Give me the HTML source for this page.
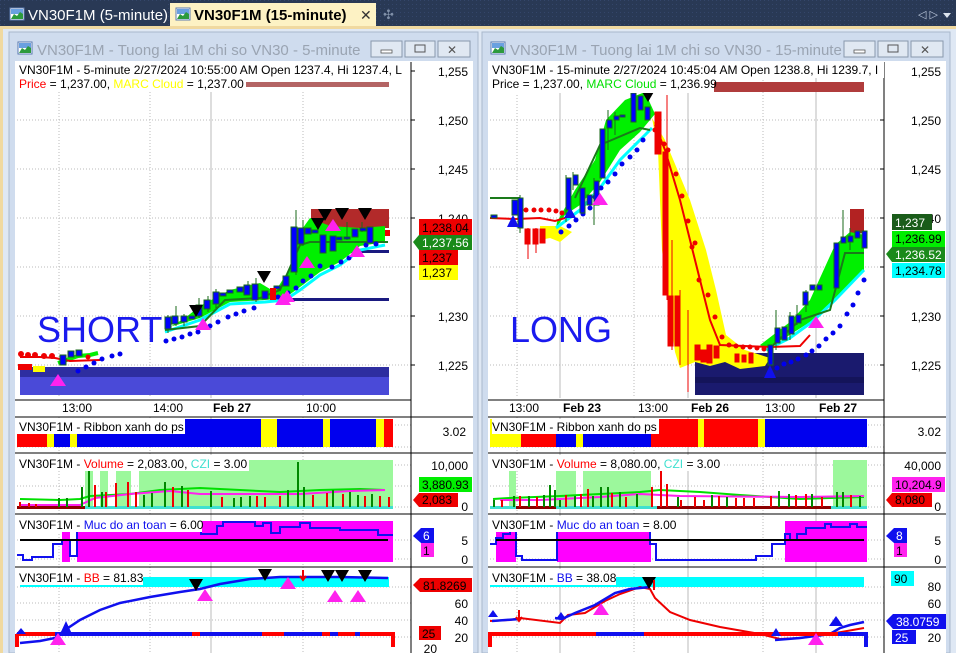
<!DOCTYPE html>
<html><head><meta charset="utf-8"><style>
body{margin:0;width:956px;height:653px;overflow:hidden;background:#293955;font-family:"Liberation Sans",sans-serif;position:relative}
.a{position:absolute}
</style></head><body>
<svg class="a" style="left:0;top:0" width="956" height="653" viewBox="0 0 956 653" font-family="Liberation Sans, sans-serif">
<defs>
<pattern id="dots" width="4" height="4" patternUnits="userSpaceOnUse"><rect width="4" height="4" fill="#293955"/><rect width="1" height="1" fill="#34466a"/></pattern>
<g id="ico"><rect x="0" y="0" width="14" height="12" fill="#fff" stroke="#5a7ab0"/><rect x="1" y="1" width="12" height="5" fill="#6aa0e0"/><path d="M1 11 L4 6 L7 8 L10 4 L13 6 L13 11 Z" fill="#2c9a3c"/></g>
<g id="dn"><path d="M-7 0 L7 0 L0 12 Z" fill="#000"/></g>
<g id="up"><path d="M-8 12 L8 12 L0 0 Z" fill="#ff22ee"/></g>
</defs>
<rect width="956" height="26" fill="url(#dots)"/>
<rect x="6" y="4" width="160" height="22" fill="#293955"/>
<use href="#ico" x="10" y="8"/>
<text x="28" y="20" fill="#fff" font-size="15">VN30F1M (5-minute)</text>
<rect x="170" y="3" width="206" height="23" fill="#fdf2c4"/>
<use href="#ico" x="176" y="8"/>
<text x="194" y="20" fill="#000" font-size="15" font-weight="bold">VN30F1M (15-minute)</text>
<text x="360" y="20" fill="#333" font-size="14">✕</text>
<text x="383" y="19" fill="#8090a8" font-size="13">✣</text>
<text x="918" y="18" fill="#bcc8dc" font-size="11">◁ ▷</text>
<path d="M943 13 L951 13 L947 18 Z" fill="#dde4ee"/>
<rect x="0" y="26" width="956" height="627" fill="#f0d9a0"/>
<rect x="3" y="29" width="953" height="624" fill="#dfe8f4"/>
<g>
<rect x="9" y="32" width="469" height="621" fill="#cfdcee" stroke="#a8b8cc"/>
<use href="#ico" x="18" y="42"/>
<text x="37" y="55" fill="#9aa4b2" font-size="15">VN30F1M - Tuong lai 1M chi so VN30 - 5-minute</text>
<rect x="371" y="41" width="31" height="16" fill="#e0e8f2" stroke="#8898ac"/><rect x="381" y="50" width="11" height="3" fill="#fff" stroke="#555" stroke-width=".8"/>
<rect x="405" y="41" width="30" height="16" fill="#e0e8f2" stroke="#8898ac"/><rect x="415" y="45" width="10" height="7" fill="none" stroke="#555"/>
<rect x="438" y="41" width="32" height="16" fill="#e0e8f2" stroke="#8898ac"/><text x="447" y="54" font-size="12" fill="#555">✕</text>
<rect x="15" y="61" width="458" height="592" fill="#fff"/>
</g>
<g>
<rect x="482" y="32" width="468" height="621" fill="#cfdcee" stroke="#a8b8cc"/>
<use href="#ico" x="491" y="42"/>
<text x="510" y="55" fill="#9aa4b2" font-size="15">VN30F1M - Tuong lai 1M chi so VN30 - 15-minute</text>
<rect x="844" y="41" width="31" height="16" fill="#e0e8f2" stroke="#8898ac"/><rect x="854" y="50" width="11" height="3" fill="#fff" stroke="#555" stroke-width=".8"/>
<rect x="878" y="41" width="30" height="16" fill="#e0e8f2" stroke="#8898ac"/><rect x="888" y="45" width="10" height="7" fill="none" stroke="#555"/>
<rect x="911" y="41" width="32" height="16" fill="#e0e8f2" stroke="#8898ac"/><text x="920" y="54" font-size="12" fill="#555">✕</text>
<rect x="488" y="61" width="458" height="592" fill="#fff"/>
</g>

<g stroke="#bbb" stroke-dasharray="1,2" stroke-width="1">
<path d="M17 120H411M17 169H411M17 218H411M17 267H411M17 316H411M17 365H411"/>
<path d="M59 62V398M150 62V398M303 62V398"/>
<path d="M17 425H411M17 447H411M17 465H411M17 486H411M17 507H411M17 540H411M17 559H411M17 587H411M17 603H411M17 620H411M17 637H411"/>
<path d="M59 417V653M150 417V653M303 417V653"/>
</g>
<path d="M211 62V398M211 417V653" stroke="#bbb"/>
<path d="M411 62V653" stroke="#000"/>
<path d="M15 400H411M15 417H473M15 453H473M15 514H473M15 567H473" stroke="#000"/>
<path d="M411 71h4M411 120h4M411 169h4M411 218h4M411 267h4M411 316h4M411 365h4" stroke="#000"/>
<rect x="20" y="367" width="369" height="28" fill="#4a4ad8"/><rect x="20" y="367" width="369" height="10" fill="#2e2ea0"/>
<rect x="311" y="209" width="78" height="19" fill="#b22a2a"/>
<rect x="340" y="250" width="49" height="3" fill="#1a1a80"/><rect x="273" y="298" width="116" height="3" fill="#1a1a80"/>
<path d="M165 330 L185 318 L200 306 L230 290 L260 283 L275 292 L290 268 L300 232 L310 218 L330 226 L360 228 L385 226 L385 242 L360 246 L340 262 L320 272 L300 287 L285 298 L265 300 L230 302 L200 318 L180 324 L165 328Z" fill="#00f000"/>
<path d="M165 332 L200 320 L230 304 L265 302 L285 300 L300 290 L320 275 L340 265 L360 250 L385 245" fill="none" stroke="#00ffff" stroke-width="3"/>
<path d="M165 330 L200 326 L225 300 L260 298 L280 290 L300 245 L310 242 L388 242" fill="none" stroke="#1a7a1a" stroke-width="2"/>
<path d="M58 363 L78 356 L90 355 L98 353" fill="#00f000" stroke="#00f000" stroke-width="4"/>
<path d="M20 357 L40 357 L55 358 L70 361 L100 360" fill="none" stroke="#e00" stroke-width="2"/>
<g fill="#e00"><circle cx="21" cy="354" r="3"/><circle cx="28" cy="355" r="3"/><circle cx="35" cy="355" r="3"/><circle cx="44" cy="356" r="3"/><circle cx="52" cy="356" r="3"/><circle cx="88" cy="357" r="2.5"/><rect x="18" y="364" width="14" height="6"/><rect x="33" y="366" width="12" height="6" fill="#ff0"/></g>
<g fill="#0000ee">
<circle cx="78" cy="371" r="2.5"/><circle cx="86" cy="367" r="2.5"/><circle cx="94" cy="363" r="2.5"/><circle cx="102" cy="359" r="2.5"/><circle cx="112" cy="356" r="2.5"/><circle cx="120" cy="354" r="2.5"/>
<circle cx="166" cy="341" r="2.5"/><circle cx="174" cy="339" r="2.5"/><circle cx="182" cy="337" r="2.5"/><circle cx="190" cy="334" r="2.5"/><circle cx="198" cy="332" r="2.5"/><circle cx="210" cy="326" r="2.5"/><circle cx="218" cy="322" r="2.5"/><circle cx="228" cy="317" r="2.5"/><circle cx="236" cy="314" r="2.5"/><circle cx="244" cy="311" r="2.5"/><circle cx="254" cy="308" r="2.5"/>
<circle cx="278" cy="297" r="2.5"/><circle cx="288" cy="293" r="2.5"/><circle cx="296" cy="288" r="2.5"/><circle cx="303" cy="281" r="2.5"/><circle cx="311" cy="276" r="2.5"/><circle cx="320" cy="266" r="2.5"/><circle cx="332" cy="267" r="2.5"/><circle cx="341" cy="262" r="2.5"/><circle cx="349" cy="258" r="2.5"/><circle cx="358" cy="251" r="2.5"/><circle cx="366" cy="245" r="2.5"/><circle cx="376" cy="244" r="2.5"/>
</g>
<g stroke="#1a6a1a" fill="#0000ff" stroke-width="1">
<path d="M168 315V333M176 306V326M184 314V326M199 298V318M208 296V312M216 289V308M248 281V293M256 278V302M296 210V275M303 220V246M347 222V240M362 222V232"/>
<rect x="165" y="317" width="6" height="12"/><rect x="172" y="316" width="6" height="8"/><rect x="181" y="316" width="6" height="6"/><rect x="189" y="316" width="6" height="3"/><rect x="196" y="305" width="6" height="11"/><rect x="204" y="300" width="6" height="9"/><rect x="213" y="292" width="6" height="12"/><rect x="220" y="293" width="6" height="3"/><rect x="227" y="290" width="6" height="3"/><rect x="237" y="287" width="6" height="5"/><rect x="244" y="285" width="6" height="10"/><rect x="252" y="284" width="6" height="16"/><rect x="262" y="291" width="6" height="8"/><rect x="274" y="286" width="6" height="3"/><rect x="283" y="276" width="6" height="10"/><rect x="291" y="227" width="6" height="45"/><rect x="298" y="228" width="6" height="16"/><rect x="305" y="228" width="6" height="6"/><rect x="312" y="230" width="6" height="3"/><rect x="320" y="235" width="6" height="18"/><rect x="330" y="236" width="6" height="15"/><rect x="336" y="237" width="6" height="3"/><rect x="344" y="237" width="6" height="2"/><rect x="352" y="229" width="6" height="8"/><rect x="360" y="228" width="6" height="3"/><rect x="367" y="227" width="6" height="16"/><rect x="60" y="355" width="6" height="10"/><rect x="68" y="351" width="6" height="6"/><rect x="76" y="350" width="6" height="6"/>
</g>
<rect x="270" y="288" width="6" height="12" fill="#e00"/>
<rect x="385" y="230" width="5" height="6" fill="#e00"/>
<use href="#dn" x="196" y="305"/><use href="#dn" x="264" y="271"/><use href="#dn" x="325" y="209"/><use href="#dn" x="342" y="208"/><use href="#dn" x="365" y="208"/><use href="#dn" x="318" y="218"/>
<use href="#up" x="203" y="318"/><use href="#up" x="287" y="290"/><use href="#up" x="333" y="219"/><use href="#up" x="357" y="245"/><use href="#up" x="58" y="374"/><use href="#up" x="307" y="256"/><use href="#up" x="283" y="293"/>
<text x="37" y="342" fill="#1a1aee" font-size="36">SHORT</text>
<rect x="17" y="62" width="391" height="30" fill="#fff"/>
<text x="19" y="74" font-size="12" fill="#000">VN30F1M - 5-minute 2/27/2024 10:55:00 AM Open 1237.4, Hi 1237.4, L</text>
<text x="19" y="88" font-size="12"><tspan fill="#f00">Price</tspan> = 1,237.00, <tspan fill="#ff0">MARC Cloud</tspan> = 1,237.00</text>
<rect x="246" y="82" width="143" height="5" fill="#b46464"/>
<g font-size="12" fill="#000" text-anchor="end"><text x="468" y="76">1,255</text><text x="468" y="125">1,250</text><text x="468" y="174">1,245</text><text x="468" y="223">1,240</text><text x="468" y="321">1,230</text><text x="468" y="370">1,225</text></g>
<rect x="419" y="219" width="53" height="16" fill="#e00"/><text x="422" y="232" font-size="12">1,238.04</text>
<path d="M413 242 L419 235 H472 V250 H419Z" fill="#1a8a1a"/><text x="422" y="247" font-size="12" fill="#fff">1,237.56</text>
<rect x="419" y="250" width="39" height="15" fill="#e00"/><text x="422" y="262" font-size="12">1,237</text>
<rect x="419" y="265" width="39" height="15" fill="#ff0"/><text x="422" y="277" font-size="12">1,237</text>
<g font-size="12" fill="#000"><text x="62" y="412">13:00</text><text x="153" y="412">14:00</text><text x="213" y="412" font-weight="bold">Feb 27</text><text x="306" y="412">10:00</text></g>
<rect x="17" y="419" width="376" height="28" fill="#0000ee"/>
<g fill="#ff0"><rect x="47" y="419" width="7" height="28"/><rect x="70" y="419" width="7" height="28"/><rect x="261" y="419" width="16" height="28"/><rect x="323" y="419" width="7" height="28"/><rect x="376" y="419" width="8" height="28"/></g>
<rect x="17" y="419" width="30" height="28" fill="#f00"/><rect x="384" y="419" width="9" height="28" fill="#f00"/>
<rect x="17" y="419" width="168" height="15" fill="#fff"/>
<text x="19" y="431" font-size="12">VN30F1M - Ribbon xanh do ps</text>
<text x="466" y="436" font-size="12" text-anchor="end">3.02</text>
<g fill="#9cf89c"><rect x="85" y="470" width="8" height="37"/><rect x="100" y="470" width="8" height="37"/><rect x="116" y="470" width="15" height="37"/><rect x="139" y="460" width="254" height="47"/></g>
<rect x="17" y="506" width="376" height="3" fill="#40e0d0"/><rect x="17" y="506" width="68" height="3" fill="#8b0000"/>
<path d="M20 499 L60 500 L80 499 L90 496 L130 494 L160 490 L200 488 L240 490 L280 492 L320 490 L360 489 L385 490" fill="none" stroke="#00e000" stroke-width="2"/>
<path d="M20 505 L80 505 L95 498 L130 494 L170 491 L200 494 L250 494 L300 494 L350 491 L385 490" fill="none" stroke="#ff22ee" stroke-width="2"/>
<g stroke-width="2"><path stroke="#080" d="M59 498V507M67 498V507M82 487V507M89 471V507M102 492V507M144 495V507M152 493V507M165 482V507M182 486V507M211 491V507M234 498V507M241 497V507M250 496V507M288 490V507M298 462V507M304 487V507M333 490V507M350 492V507M358 495V507M372 494V507"/>
<path stroke="#e00" d="M20 502V507M29 503V507M36 504V507M95 485V507M106 492V507M116 483V507M128 482V507M136 492V507M173 487V507M188 490V507M222 497V507M257 496V507M265 497V507M280 496V507M313 495V507M327 493V507M343 494V507M365 496V507M380 496V507M389 497V507"/></g>
<rect x="17" y="455" width="232" height="16" fill="#fff"/>
<text x="19" y="468" font-size="12">VN30F1M - <tspan fill="#f00">Volume</tspan> = 2,083.00, <tspan fill="#40e0d0">CZI</tspan> = 3.00</text>
<text x="468" y="470" font-size="12" text-anchor="end">10,000</text><text x="468" y="511" font-size="12" text-anchor="end">0</text>
<rect x="419" y="477" width="53" height="15" fill="#00ee00"/><text x="422" y="489" font-size="12">3,880.93</text>
<path d="M413 500 L419 493 H458 V507 H419Z" fill="#e00"/><text x="422" y="504" font-size="12">2,083</text>
<rect x="62" y="531" width="8" height="31" fill="#ff00ff"/><rect x="77" y="521" width="316" height="41" fill="#ff00ff"/>
<path d="M17 555 H23 V560 H32 V557 H53 V544 H62 V540 H70 V556 H77 V528 L200 528 H201 V534 H217 V526 H223 V522 H255 V526 H263 V523 H271 V533 H280 V527 H300 V523 H310 V528 H340 V530 H378 V535 H393" fill="none" stroke="#1010ee" stroke-width="2"/>
<path d="M20 540 H388" stroke="#000" stroke-width="2"/>
<rect x="17" y="516" width="185" height="16" fill="#fff"/>
<text x="19" y="529" font-size="12">VN30F1M - <tspan fill="#1010ee">Muc do an toan</tspan> = 6.00</text>
<path d="M413 536 L421 528 H434 V543 H421Z" fill="#1010ee"/><text x="423" y="540" font-size="12" fill="#fff">6</text>
<rect x="421" y="543" width="13" height="14" fill="#ff22ee"/><text x="423" y="555" font-size="12">1</text>
<text x="468" y="545" font-size="12" text-anchor="end">5</text><text x="468" y="564" font-size="12" text-anchor="end">0</text>
<rect x="143" y="577" width="246" height="10" fill="#00ffff"/><rect x="20" y="584" width="123" height="3" fill="#00ffff"/>
<path d="M20 643 L40 641 L55 638 L65 630 L80 620 L100 610 L120 603 L150 597 L180 592 L200 589 L220 584 L250 579 L280 577 L300 577 L340 577 L388 578" fill="none" stroke="#1010ee" stroke-width="2.5"/>
<path d="M17 634 H393 V647" fill="none" stroke="#f00" stroke-width="4"/>
<path d="M55 634 H192 M200 634 H262 M284 634 H322 M330 634 H338 M355 634 H360" stroke="#1010ee" stroke-width="4"/>
<path d="M17 634 V647" stroke="#f00" stroke-width="4"/>
<use href="#dn" x="196" y="579"/><use href="#dn" x="265" y="569"/><use href="#dn" x="328" y="570"/><use href="#dn" x="342" y="570"/><use href="#dn" x="365" y="570"/>
<use href="#up" x="205" y="589"/><use href="#up" x="288" y="577"/><use href="#up" x="335" y="590"/><use href="#up" x="358" y="590"/><use href="#up" x="58" y="633"/>
<path d="M66 634 L60 634 L66 621 L72 634Z M21 634 L16 634 L21 628 L26 634Z" fill="#1010ee"/>
<path d="M303 570 V578 M300 576 L303 580 L306 576" stroke="#e00" stroke-width="2" fill="none"/>
<rect x="17" y="569" width="126" height="16" fill="#fff"/>
<text x="19" y="582" font-size="12">VN30F1M - <tspan fill="#f00">BB</tspan> = 81.83</text>
<path d="M413 585 L420 578 H472 V592 H420Z" fill="#e00"/><text x="423" y="590" font-size="12">81.8269</text>
<rect x="419" y="626" width="22" height="14" fill="#e00"/><text x="422" y="638" font-size="12">25</text>
<g font-size="12" text-anchor="end"><text x="468" y="608">60</text><text x="468" y="625">40</text><text x="468" y="642">20</text><text x="437" y="653">20</text></g>

<g stroke="#bbb" stroke-dasharray="1,2" stroke-width="1">
<path d="M490 120H884M490 169H884M490 218H884M490 267H884M490 316H884M490 365H884"/>
<path d="M517 62V398M634 62V398M763 62V398"/>
<path d="M490 425H884M490 447H884M490 465H884M490 486H884M490 507H884M490 540H884M490 559H884M490 587H884M490 603H884M490 620H884M490 637H884"/>
<path d="M517 417V653M634 417V653M763 417V653"/>
</g>
<path d="M560 62V398M688 62V398M816 62V398M560 417V653M688 417V653M816 417V653" stroke="#bbb"/>
<path d="M884 62V653" stroke="#000"/>
<path d="M488 400H884M488 417H946M488 453H946M488 514H946M488 567H946" stroke="#000"/>
<path d="M884 71h-4M884 120h-4M884 169h-4M884 218h-4M884 267h-4M884 316h-4M884 365h-4" stroke="#000"/>
<rect x="651" y="82" width="213" height="10" fill="#b03c3c"/>
<rect x="695" y="353" width="169" height="42" fill="#1a1a6e"/><rect x="695" y="377" width="169" height="6" fill="#14145a"/>
<rect x="850" y="209" width="14" height="24" fill="#b22222"/>
<path d="M652 118 L665 140 L690 200 L706 250 L716 290 L726 335 L745 350 L770 358 L765 366 L740 369 L725 362 L710 366 L695 362 L680 368 L675 352 L668 300 L662 250 L658 150Z" fill="#ff0"/>
<path d="M540 226 L560 226 L572 232 L560 242 L550 238 L540 240Z" fill="#ff0"/>
<path d="M557 222 L575 190 L595 160 L606 120 L625 100 L645 92 L655 114 L640 132 L620 150 L600 182 L580 205 L565 215 L556 228Z" fill="#00f000"/>
<path d="M760 345 L790 322 L810 300 L835 245 L850 232 L864 235 L864 270 L850 285 L830 305 L810 322 L785 338 L765 348Z" fill="#00f000"/>
<path d="M556 228 L580 210 L600 188 L620 160 L645 135 L652 128 M766 350 L790 338 L812 322 L835 300 L864 270" fill="none" stroke="#00ffff" stroke-width="3"/>
<path d="M490 198 L520 198 M575 198 L600 145 L640 128 L650 130 M770 348 L800 320 L830 310 L845 253 L864 253" fill="none" stroke="#1a7a1a" stroke-width="2"/>
<path d="M490 218 L515 219 L540 218 L555 221 L565 218 M655 125 L665 150 L680 200 L690 240 L700 280 L710 320 L720 345 L770 347 L800 346 L810 335" fill="none" stroke="#e00" stroke-width="2"/>
<g fill="#e00"><circle cx="526" cy="210" r="2.5"/><circle cx="534" cy="210" r="2.5"/><circle cx="541" cy="210" r="2.5"/><circle cx="549" cy="210" r="2.5"/><circle cx="556" cy="211" r="2.5"/><circle cx="562" cy="213" r="2.5"/>
<circle cx="655" cy="130" r="2.5"/><circle cx="664" cy="144" r="2.5"/><circle cx="668" cy="150" r="2.5"/><circle cx="676" cy="174" r="2.5"/><circle cx="682" cy="196" r="2.5"/><circle cx="688" cy="221" r="2.5"/><circle cx="692" cy="247" r="2.5"/><circle cx="695" cy="243" r="2.5"/><circle cx="699" cy="280" r="2.5"/><circle cx="708" cy="295" r="2.5"/><circle cx="715" cy="317" r="2.5"/><circle cx="722" cy="337" r="2.5"/><circle cx="729" cy="345" r="2.5"/><circle cx="736" cy="346" r="2.5"/><circle cx="743" cy="347" r="2.5"/><circle cx="750" cy="347" r="2.5"/><circle cx="757" cy="348" r="2.5"/><circle cx="764" cy="349" r="2.5"/></g>
<g fill="#0000ee">
<circle cx="561" cy="232" r="2.5"/><circle cx="569" cy="226" r="2.5"/><circle cx="576" cy="220" r="2.5"/><circle cx="583" cy="214" r="2.5"/><circle cx="590" cy="208" r="2.5"/><circle cx="595" cy="197" r="2.5"/><circle cx="601" cy="188" r="2.5"/><circle cx="608" cy="182" r="2.5"/><circle cx="615" cy="174" r="2.5"/><circle cx="622" cy="164" r="2.5"/><circle cx="630" cy="157" r="2.5"/><circle cx="637" cy="150" r="2.5"/><circle cx="643" cy="140" r="2.5"/>
<circle cx="777" cy="368" r="2.5"/><circle cx="784" cy="364" r="2.5"/><circle cx="791" cy="362" r="2.5"/><circle cx="798" cy="359" r="2.5"/><circle cx="806" cy="355" r="2.5"/><circle cx="812" cy="351" r="2.5"/><circle cx="819" cy="346" r="2.5"/><circle cx="826" cy="339" r="2.5"/><circle cx="833" cy="333" r="2.5"/><circle cx="840" cy="326" r="2.5"/><circle cx="847" cy="314" r="2.5"/><circle cx="853" cy="305" r="2.5"/><circle cx="858" cy="293" r="2.5"/><circle cx="864" cy="280" r="2.5"/></g>
<g stroke="#1a6a1a" fill="#0000ff">
<path d="M520 195V233M566 175V222M573 172V190M594 178V225M608 110V150M615 112V135M633 90V122M776 310V350M790 312V340M797 305V325M806 290V312M843 210V240M850 228V250"/>
<rect x="491" y="215" width="6" height="3"/><rect x="512" y="200" width="6" height="15"/><rect x="518" y="198" width="5" height="30"/><rect x="566" y="178" width="5" height="32"/><rect x="573" y="175" width="5" height="10"/><rect x="580" y="188" width="5" height="25"/><rect x="587" y="195" width="5" height="10"/><rect x="594" y="181" width="5" height="24"/><rect x="600" y="129" width="5" height="49"/><rect x="607" y="120" width="5" height="8"/><rect x="614" y="116" width="5" height="4"/><rect x="620" y="115" width="5" height="2"/><rect x="631" y="93" width="5" height="29"/><rect x="638" y="96" width="5" height="14"/><rect x="645" y="107" width="5" height="13"/>
<rect x="768" y="345" width="5" height="20"/><rect x="775" y="328" width="5" height="15"/><rect x="782" y="327" width="5" height="13"/><rect x="789" y="316" width="5" height="18"/><rect x="796" y="315" width="5" height="8"/><rect x="803" y="292" width="5" height="13"/><rect x="810" y="285" width="5" height="5"/><rect x="817" y="285" width="5" height="5"/><rect x="834" y="243" width="5" height="45"/><rect x="841" y="237" width="5" height="6"/><rect x="848" y="236" width="5" height="6"/><rect x="855" y="231" width="5" height="7"/><rect x="862" y="231" width="5" height="17"/></g>
<g fill="#e00" stroke="#e00"><path d="M528 228V259M536 228V253M667 95V300M672 240V350M680 290V365M688 310V392"/>
<rect x="525" y="229" width="5" height="15"/><rect x="533" y="229" width="5" height="15"/><rect x="540" y="229" width="5" height="14"/><rect x="655" y="112" width="6" height="42"/><rect x="663" y="152" width="5" height="143"/><rect x="668" y="296" width="5" height="50"/><rect x="675" y="296" width="5" height="50"/><rect x="695" y="345" width="5" height="15"/><rect x="701" y="350" width="5" height="12"/><rect x="707" y="345" width="5" height="18"/><rect x="714" y="346" width="5" height="12"/><rect x="735" y="354" width="4" height="8"/><rect x="742" y="355" width="4" height="7"/><rect x="749" y="353" width="4" height="10"/></g>
<use href="#dn" x="648" y="90"/>
<use href="#up" x="600" y="193"/><use href="#up" x="816" y="316"/>
<path d="M513 227 L507 227 L513 215 L519 227Z M570 218 L564 218 L570 207 L576 218Z M770 378 L764 378 L770 365 L776 378Z" fill="#1010ee"/>
<text x="510" y="342" fill="#1a1aee" font-size="36">LONG</text>
<rect x="490" y="62" width="394" height="16" fill="#fff"/>
<text x="492" y="74" font-size="12">VN30F1M - 15-minute 2/27/2024 10:45:04 AM Open 1238.8, Hi 1239.7, I</text>
<rect x="490" y="78" width="224" height="15" fill="#fff"/>
<text x="492" y="88" font-size="12">Price = 1,237.00, <tspan fill="#00e000">MARC Cloud</tspan> = 1,236.99</text>
<g font-size="12" text-anchor="end"><text x="941" y="76">1,255</text><text x="941" y="125">1,250</text><text x="941" y="174">1,245</text><text x="941" y="223">1,240</text><text x="941" y="321">1,230</text><text x="941" y="370">1,225</text></g>
<rect x="892" y="214" width="40" height="16" fill="#1a5c1a"/><text x="895" y="227" font-size="12" fill="#fff">1,237</text>
<rect x="892" y="231" width="53" height="16" fill="#00ee00"/><text x="895" y="243" font-size="12">1,236.99</text>
<path d="M886 254 L892 247 H945 V262 H892Z" fill="#1a8a1a"/><text x="895" y="259" font-size="12" fill="#fff">1,236.52</text>
<rect x="892" y="263" width="53" height="15" fill="#00ffff"/><text x="895" y="275" font-size="12">1,234.78</text>
<g font-size="12"><text x="509" y="412">13:00</text><text x="563" y="412" font-weight="bold">Feb 23</text><text x="638" y="412">13:00</text><text x="691" y="412" font-weight="bold">Feb 26</text><text x="765" y="412">13:00</text><text x="819" y="412" font-weight="bold">Feb 27</text></g>
<rect x="490" y="419" width="377" height="28" fill="#0000ee"/>
<g fill="#ff0"><rect x="490" y="419" width="31" height="28"/><rect x="576" y="419" width="7" height="28"/><rect x="698" y="419" width="6" height="28"/><rect x="758" y="419" width="7" height="28"/></g>
<g fill="#f00"><rect x="521" y="419" width="35" height="28"/><rect x="651" y="419" width="47" height="28"/><rect x="704" y="419" width="54" height="28"/></g>
<rect x="492" y="419" width="167" height="15" fill="#fff"/>
<text x="492" y="431" font-size="12">VN30F1M - Ribbon xanh do ps</text>
<text x="941" y="436" font-size="12" text-anchor="end">3.02</text>
<g fill="#9cf89c"><rect x="509" y="470" width="7" height="37"/><rect x="556" y="470" width="20" height="37"/><rect x="583" y="470" width="68" height="37"/><rect x="833" y="460" width="34" height="47"/></g>
<rect x="490" y="506" width="377" height="3" fill="#40e0d0"/><rect x="516" y="506" width="40" height="3" fill="#8b0000"/><rect x="657" y="506" width="174" height="3" fill="#8b0000"/>
<path d="M493 499 L510 498 L560 496 L600 494 L640 492 L660 490 L700 492 L740 495 L770 497 L800 499 L830 498 L864 497" fill="none" stroke="#00e000" stroke-width="2"/>
<path d="M500 500 L540 500 L600 497 L640 494 L680 496 L800 497 L864 496" fill="none" stroke="#ff22ee" stroke-width="2"/>
<g stroke-width="2"><path stroke="#080" d="M494 500V507M514 496V507M529 496V507M544 495V507M550 485V507M555 490V507M560 500V507M575 496V507M593 496V507M601 487V507M608 487V507M620 492V507M637 494V507M667 498V507M678 497V507M712 495V507M727 497V507M779 491V507M789 494V507M812 494V507M837 492V507M843 492V507M860 496V507"/>
<path stroke="#e00" d="M502 500V507M520 496V507M537 497V507M566 495V507M581 494V507M588 489V507M612 493V507M626 497V507M652 487V507M661 471V507M667 484V507M681 500V507M695 497V507M704 500V507M719 496V507M736 498V507M744 498V507M754 498V507M771 496V507M796 495V507M806 494V507M822 497V507M851 495V507"/></g>
<rect x="490" y="455" width="232" height="16" fill="#fff"/>
<text x="492" y="468" font-size="12">VN30F1M - <tspan fill="#f00">Volume</tspan> = 8,080.00, <tspan fill="#40e0d0">CZI</tspan> = 3.00</text>
<text x="941" y="470" font-size="12" text-anchor="end">40,000</text><text x="941" y="511" font-size="12" text-anchor="end">0</text>
<rect x="892" y="477" width="53" height="15" fill="#ff22ee"/><text x="895" y="489" font-size="12">10,204.9</text>
<path d="M886 500 L892 493 H932 V507 H892Z" fill="#e00"/><text x="895" y="504" font-size="12">8,080</text>
<g fill="#ff00ff"><rect x="496" y="531" width="20" height="31"/><rect x="557" y="531" width="94" height="31"/><rect x="785" y="521" width="82" height="41"/></g>
<path d="M490 544 H496 V538 H503 V534 H510 V531 H516 V556 H522 V560 H557 V531 L650 531 V544 H656 V560 H756 V556 H772 V544 H785 V534 H790 V540 H797 V534 H806 V528 H825 V524 H831 V527 H850 V524 H857 V527 H867" fill="none" stroke="#1010ee" stroke-width="2"/>
<path d="M496 540 H864" stroke="#000" stroke-width="2"/>
<rect x="490" y="516" width="185" height="16" fill="#fff"/>
<text x="492" y="529" font-size="12">VN30F1M - <tspan fill="#1010ee">Muc do an toan</tspan> = 8.00</text>
<path d="M886 536 L894 528 H907 V543 H894Z" fill="#1010ee"/><text x="896" y="540" font-size="12" fill="#fff">8</text>
<rect x="894" y="543" width="13" height="14" fill="#ff22ee"/><text x="896" y="555" font-size="12">1</text>
<text x="941" y="545" font-size="12" text-anchor="end">5</text><text x="941" y="564" font-size="12" text-anchor="end">0</text>
<rect x="490" y="577" width="374" height="10" fill="#00ffff"/>
<path d="M490 621 L510 620 L520 618 L560 623 L568 615 L585 613 L605 601 L620 594 L640 587 L650 589 L655 598 L670 612 L690 620 L720 627 L760 634 L780 639 L800 638 L830 634 L864 628" fill="none" stroke="#e00" stroke-width="2"/>
<path d="M492 621 L520 619 M555 618 L562 619 L575 613 L595 605 L615 593 L630 589 L650 587 M775 640 L800 638 L830 634 L840 628 L850 625 L864 622" fill="none" stroke="#1010ee" stroke-width="2.5"/>
<path d="M490 647 V634 H866 V647" fill="none" stroke="#f00" stroke-width="4"/>
<path d="M596 634 H644 M838 634 H866 V647" fill="none" stroke="#1010ee" stroke-width="4"/>
<use href="#dn" x="649" y="577"/><use href="#up" x="601" y="603"/><use href="#up" x="816" y="633"/>
<path d="M493 617 L488 617 L493 610 L498 617Z M561 619 L556 619 L561 612 L566 619Z M776 636 L771 636 L776 628 L781 636Z M836 626 L829 626 L836 616 L843 626Z" fill="#1010ee"/>
<path d="M519 610 V620 M516 617 L519 621 L522 617 M654 580 V590" stroke="#e00" stroke-width="2" fill="none"/>
<rect x="490" y="569" width="126" height="16" fill="#fff"/>
<text x="492" y="582" font-size="12">VN30F1M - <tspan fill="#1010ee">BB</tspan> = 38.08</text>
<rect x="891" y="571" width="23" height="15" fill="#00ffff"/><text x="894" y="583" font-size="12">90</text>
<path d="M886 621 L893 614 H946 V629 H893Z" fill="#1010ee"/><text x="896" y="626" font-size="12" fill="#fff">38.0759</text>
<rect x="892" y="630" width="24" height="14" fill="#1010ee"/><text x="895" y="642" font-size="12" fill="#fff">25</text>
<g font-size="12" text-anchor="end"><text x="941" y="591">80</text><text x="941" y="608">60</text><text x="941" y="642">20</text></g>
</svg>
</body></html>
